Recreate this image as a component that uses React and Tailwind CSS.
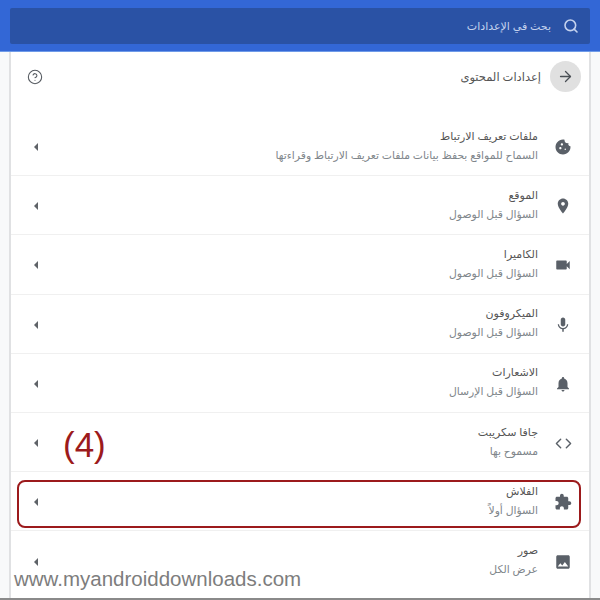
import { ArrowRight, CircleHelp, Search, Code } from 'lucide-react'

const rows = [
  { title: 'ملفات تعريف الارتباط', sub: 'السماح للمواقع بحفظ بيانات ملفات تعريف الارتباط وقراءتها', icon: 'cookie' },
  { title: 'الموقع', sub: 'السؤال قبل الوصول', icon: 'pin' },
  { title: 'الكاميرا', sub: 'السؤال قبل الوصول', icon: 'camera' },
  { title: 'الميكروفون', sub: 'السؤال قبل الوصول', icon: 'mic' },
  { title: 'الاشعارات', sub: 'السؤال قبل الإرسال', icon: 'bell' },
  { title: 'جافا سكريبت', sub: 'مسموح بها', icon: 'code' },
  { title: 'الفلاش', sub: 'السؤال أولاً', icon: 'puzzle' },
  { title: 'صور', sub: 'عرض الكل', icon: 'image' },
]

const paths = {
  cookie: 'M21.95 10.99c-1.79-.03-3.7-1.95-2.68-4.22-2.98 1-5.77-1.59-5.19-4.56C6.95.71 2 6.58 2 12c0 5.52 4.48 10 10 10 5.89 0 10.54-5.08 9.95-11.01zM8.5 15c-.83 0-1.5-.67-1.5-1.5S7.67 12 8.5 12s1.5.67 1.5 1.5S9.33 15 8.5 15zm2-5C9.67 10 9 9.33 9 8.5S9.67 7 10.5 7s1.5.67 1.5 1.5-.67 1.5-1.5 1.5zm4.5 6c-.55 0-1-.45-1-1s.45-1 1-1 1 .45 1 1-.45 1-1 1z',
  pin: 'M12 2C8.13 2 5 5.13 5 9c0 5.25 7 13 7 13s7-7.75 7-13c0-3.87-3.13-7-7-7zm0 9.5c-1.38 0-2.5-1.12-2.5-2.5s1.12-2.5 2.5-2.5 2.5 1.12 2.5 2.5-1.12 2.5-2.5 2.5z',
  camera: 'M17 10.5V7c0-.55-.45-1-1-1H4c-.55 0-1 .45-1 1v10c0 .55.45 1 1 1h12c.55 0 1-.45 1-1v-3.5l4 4v-11l-4 4z',
  mic: 'M12 14c1.66 0 3-1.34 3-3V5c0-1.66-1.34-3-3-3S9 3.34 9 5v6c0 1.66 1.34 3 3 3zm5.3-3c0 3-2.54 5.1-5.3 5.1S6.7 14 6.7 11H5c0 3.41 2.72 6.23 6 6.72V21h2v-3.28c3.28-.48 6-3.3 6-6.72h-1.7z',
  bell: 'M12 22c1.1 0 2-.9 2-2h-4c0 1.1.9 2 2 2zm6-6v-5c0-3.07-1.63-5.64-4.5-6.32V4c0-.83-.67-1.5-1.5-1.5s-1.5.67-1.5 1.5v.68C7.64 5.36 6 7.92 6 11v5l-2 2v1h16v-1l-2-2z',
  puzzle: 'M20.5 11H19V7c0-1.1-.9-2-2-2h-4V3.5C13 2.12 11.88 1 10.5 1S8 2.12 8 3.5V5H4c-1.1 0-1.99.9-1.99 2v3.8H3.5c1.49 0 2.7 1.21 2.7 2.7s-1.21 2.7-2.7 2.7H2V20c0 1.1.9 2 2 2h3.8v-1.5c0-1.49 1.21-2.7 2.7-2.7 1.49 0 2.7 1.21 2.7 2.7V22H17c1.1 0 2-.9 2-2v-4h1.5c1.38 0 2.5-1.12 2.5-2.5S21.88 11 20.5 11z',
  image: 'M21 19V5c0-1.1-.9-2-2-2H5c-1.1 0-2 .9-2 2v14c0 1.1.9 2 2 2h14c1.1 0 2-.9 2-2zM8.5 13.5l2.5 3.01L14.5 12l4.5 6H5l3.5-4.5z',
}

function RowIcon({ name }) {
  if (name === 'code') return <Code size={17} strokeWidth={2} className="text-[#5a6068]" />
  return (
    <svg viewBox="0 0 24 24" width="18" height="18" fill="#5a6068">
      <path d={paths[name]} />
    </svg>
  )
}

function Row({ title, sub, icon, last }) {
  return (
    <div className={`flex h-[59.2px] items-center pl-[23px] pr-[14px] pt-[2px] ${last ? '' : 'border-b border-[#f0f0f0]'}`}>
      <div className="flex w-[24px] shrink-0 justify-center">
        <RowIcon name={icon} />
      </div>
      <div className="mr-[13px] flex-1 pb-[5px]">
        <div className="text-[11px] leading-[19px] text-[#555555]">{title}</div>
        <div className="text-[10.8px] leading-[19px] text-[#80868b]">{sub}</div>
      </div>
      <div className="h-0 w-0 border-y-[4px] border-r-[4px] border-y-transparent border-r-[#5f6368]" />
    </div>
  )
}

export default function App() {
  return (
    <div dir="rtl" className="relative h-[600px] w-[600px] overflow-hidden bg-[#f8f9fa] font-['Noto_Sans','DejaVu_Sans',sans-serif]">
      <div className="h-[52px] border-b border-[#6f9be8] bg-[#3367d6] px-[10px] pt-[8px]">
        <div className="flex h-[36px] items-center rounded-[2px] bg-[#2a52a5] pr-[11px] text-[#c4d2ee]">
          <Search size={16} strokeWidth={2.4} />
          <span className="mr-[12px] text-[11px]">بحث في الإعدادات</span>
        </div>
      </div>

      <div className="mx-[9px] h-[546px] border-x-[2px] border-[#e0e1e3] bg-white">
        <div className="flex h-[65px] items-start pl-[16px] pr-[8px] pt-[9px]">
          <div className="flex size-[31px] shrink-0 items-center justify-center rounded-full bg-[#e0e0e0] text-[#4a4f55]">
            <ArrowRight size={17} strokeWidth={1.8} />
          </div>
          <div className="mr-[9px] flex-1 text-[11.5px] leading-[31px] text-[#555555]">إعدادات المحتوى</div>
          <CircleHelp size={16} strokeWidth={1.6} className="mt-[8px] text-[#555a60]" />
        </div>
        {rows.map((r, i) => (
          <Row key={r.icon} {...r} last={i === rows.length - 1} />
        ))}
      </div>

      <div className="absolute bottom-0 left-0 h-[2px] w-full bg-[#8a8a8a]" />

      {/* annotations drawn over the page */}
      <div className="absolute left-[17px] top-[480px] h-[48px] w-[564px] rounded-[8px] border-[2px] border-[#9c1a1c]" />
      <div dir="ltr" className="absolute left-[63px] top-[422px] font-['Liberation_Sans',sans-serif] text-[35px] leading-[46px] text-[#9c1a1c]">(4)</div>
      <div dir="ltr" className="absolute left-[14px] top-[566px] font-['Liberation_Sans',sans-serif] text-[20.5px] leading-[26px] text-[#7d7d7d]">www.myandroiddownloads.com</div>
    </div>
  )
}
